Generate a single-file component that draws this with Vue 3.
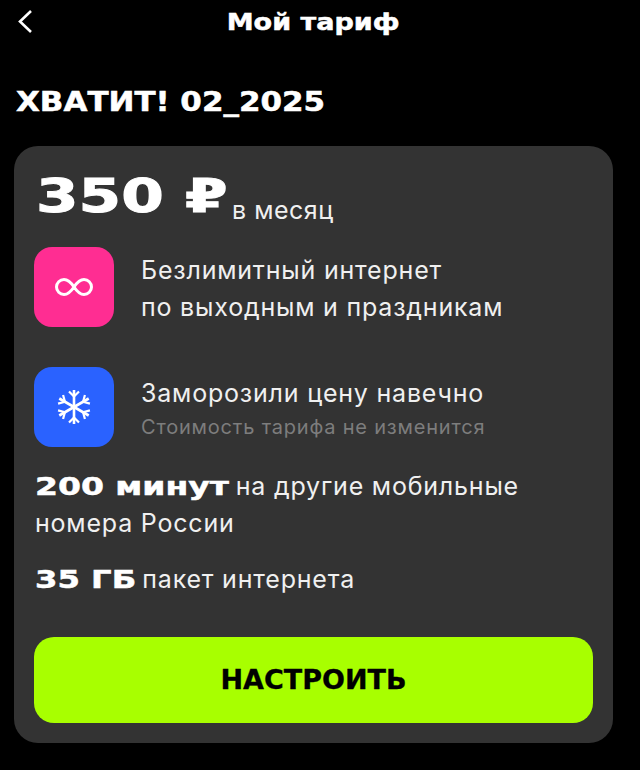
<script setup>
const features = [
  { id: 'inf', lines: ['Безлимитный интернет', 'по выходным и праздникам'] },
  { id: 'snow', lines: ['Заморозили цену навечно'], note: 'Стоимость тарифа не изменится' },
];
</script>

<template>
  <div class="page">
    <header class="top">
      <svg class="back" width="16" height="26" viewBox="0 0 16 26">
        <path d="M14 2 L3 12.5 L14 23" fill="none" stroke="#fff" stroke-width="2.6" />
      </svg>
      <span class="wide top-title">Мой тариф</span>
    </header>
    <h1 class="name"><span class="wide">ХВАТИТ! 02_2025</span></h1>
    <section class="card">
      <div class="price">
        <span class="wide amount">350 ₽</span>
        <span class="per">в месяц</span>
      </div>
      <div v-for="f in features" :key="f.id" class="feature">
        <div class="tile" :class="f.id">
          <svg v-if="f.id === 'inf'" width="38" height="20" viewBox="0 0 38 20">
            <path d="M19 10 C15 4 12 2.5 9 2.5 A7.5 7.5 0 0 0 9 17.5 C12 17.5 15 16 19 10 C23 4 26 2.5 29 2.5 A7.5 7.5 0 0 1 29 17.5 C26 17.5 23 16 19 10 Z" fill="none" stroke="#fff" stroke-width="3" />
          </svg>
          <svg v-else width="36" height="36" viewBox="0 0 36 36">
            <g v-for="a in [0, 60, 120]" :key="a" :transform="`rotate(${a} 18 18)`" fill="none" stroke="#fff" stroke-width="2.6">
              <path d="M18 1 V35" />
              <path d="M13 2.5 L18 7.5 L23 2.5 M13 33.5 L18 28.5 L23 33.5" stroke-width="2.2" />
            </g>
          </svg>
        </div>
        <div class="feature-text">
          <div v-for="l in f.lines" :key="l" class="line">{{ l }}</div>
          <div v-if="f.note" class="note">{{ f.note }}</div>
        </div>
      </div>
      <p class="para minutes"><span class="wide strong s200">200 минут</span> на другие мобильные<br>номера России</p>
      <p class="para gb"><span class="wide strong s35">35 ГБ</span> пакет интернета</p>
      <button class="action"><span class="wide action-label">НАСТРОИТЬ</span></button>
    </section>
  </div>
</template>

<style>
html, body { margin: 0; background: #000; }
</style>

<style scoped>
.page {
  width: 640px;
  height: 770px;
  background: #000;
  color: #fff;
  font-family: Inter, "Liberation Sans", sans-serif;
  overflow: hidden;
  box-sizing: border-box;
  padding: 0 27px 0 14px;
}
.wide {
  display: inline-block;
  font-family: "DejaVu Sans", sans-serif;
  font-weight: 700;
  transform-origin: left center;
  -webkit-text-stroke: 0.5px currentColor;
  white-space: nowrap;
}
.top {
  height: 44px;
  position: relative;
  display: flex;
  align-items: center;
  justify-content: center;
  margin-right: -13px;
  margin-left: -14px;
}
.back {
  position: absolute;
  left: 17px;
  top: 9px;
}
.top-title {
  font-size: 23.5px;
  transform: scaleX(1.15);
  transform-origin: center;
}
.name {
  margin: 40px 0 0 2px;
  height: 62px;
  font-size: 26px;
  line-height: 36px;
}
.name .wide {
  transform: scaleX(1.19);
}
.card {
  background: #333;
  border-radius: 24px;
  height: 597px;
  padding: 20px 20px;
  box-sizing: border-box;
  display: flex;
  flex-direction: column;
}
.price {
  display: flex;
  align-items: baseline;
  height: 81px;
  padding-left: 2px;
}
.amount {
  font-size: 46px;
  line-height: 56px;
  transform: scaleX(1.33);
  margin-right: 52px;
  -webkit-text-stroke-width: 1px;
  position: relative;
  top: 2px;
}
.per {
  font-size: 25px;
  letter-spacing: 0.5px;
  color: #f0f0f0;
  position: relative;
  top: 9px;
}
.feature {
  display: flex;
  gap: 27px;
  height: 80px;
  margin-bottom: 40px;
  align-items: center;
}
.tile {
  width: 80px;
  height: 80px;
  border-radius: 18px;
  display: flex;
  align-items: center;
  justify-content: center;
  flex: none;
}
.inf { background: #ff2d92; }
.snow { background: #2a62ff; }
.feature-text { padding-top: 3px; }
.line {
  font-size: 25px;
  line-height: 37px;
  letter-spacing: 0.8px;
  color: #f0f0f0;
}
.note {
  font-size: 20px;
  line-height: 31px;
  letter-spacing: 0.8px;
  color: #7d7d7d;
}
.para {
  margin: 0;
  padding-left: 1px;
  font-size: 25px;
  line-height: 37px;
  letter-spacing: 0.8px;
  color: #f0f0f0;
}
.minutes { margin-top: -19px; }
.gb { margin-top: 19px; }
.strong {
  font-size: 25px;
  letter-spacing: 0;
  color: #fff;
  transform: scaleX(1.32);
}
.s200 { margin-right: 46px; }
.s35 { margin-right: 21px; transform: scaleX(1.29); }
.action {
  margin-top: auto;
  height: 86px;
  border: none;
  border-radius: 20px;
  background: #a8ff00;
  color: #000;
  font-size: 27px;
  padding: 0;
}
.action-label {
  -webkit-text-stroke-width: 0.3px;
}
</style>
